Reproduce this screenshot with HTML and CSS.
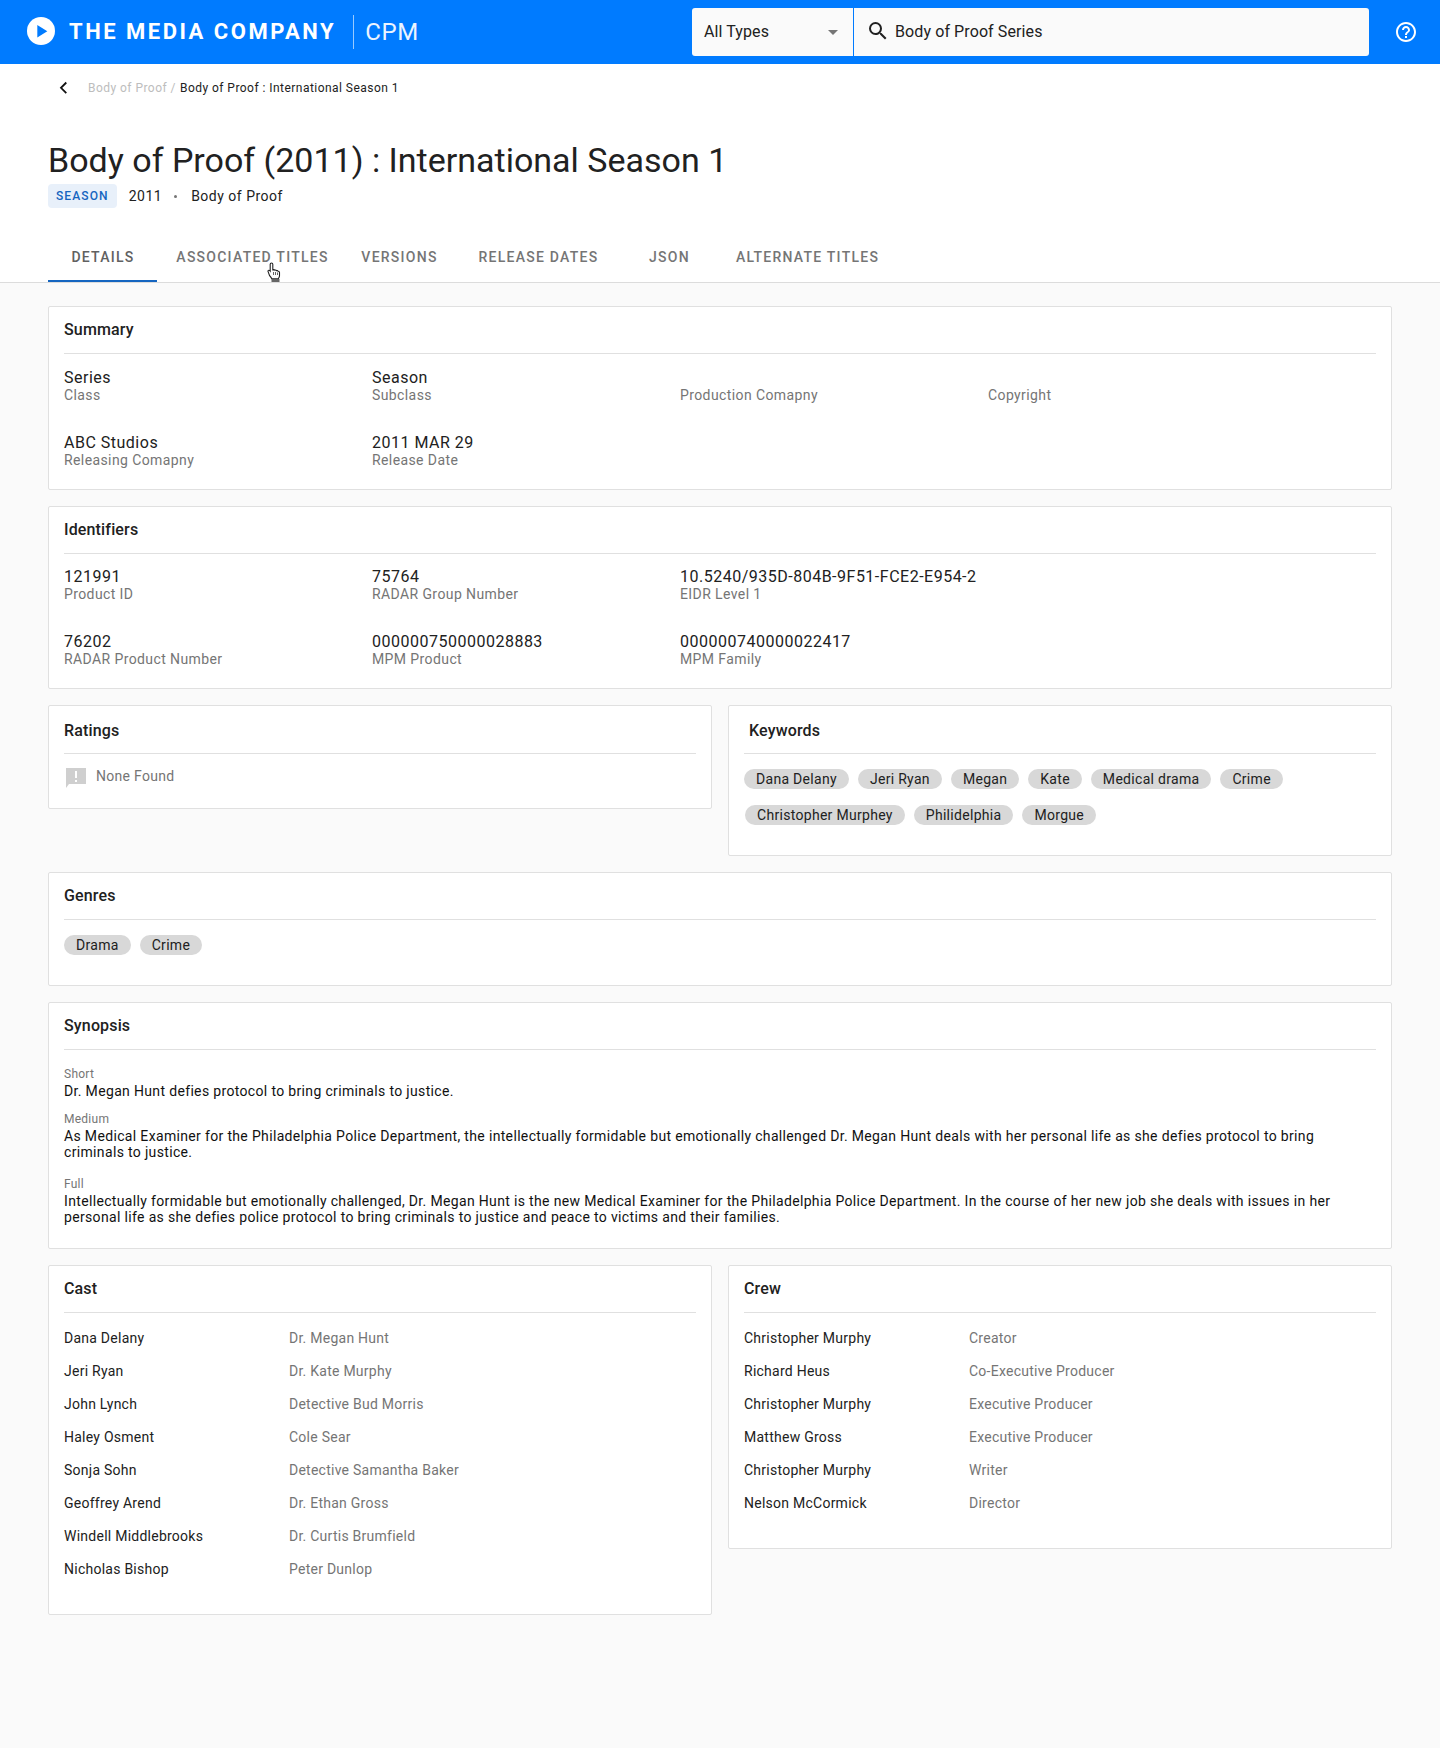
FILE: index.html
```html
<!DOCTYPE html>
<html lang="en">
<head>
<meta charset="utf-8">
<title>Body of Proof (2011) : International Season 1</title>
<link rel="stylesheet" href="styles.css">
</head>
<body>
<header class="topbar">
  <div class="brand">
    <svg class="brand-logo" viewBox="0 0 28 28"><circle cx="14" cy="14" r="14" fill="#fff"/><path d="M10.300 8 20.300 14.300 10.300 20.500z" fill="#007bff"/></svg>
    <span class="brand-name">THE MEDIA COMPANY</span>
    <span class="brand-product">CPM</span>
  </div>
  <div class="search">
    <div class="search-type"><span>All Types</span><i class="caret"></i></div>
    <div class="search-input">
      <svg class="search-icon" viewBox="0 0 24 24"><path d="M15.500 14h-.79l-.28-.27A6.470 6.470 0 0 0 16 9.500 6.500 6.500 0 1 0 9.500 16c1.610 0 3.090-.59 4.230-1.570l.27.28v.79l5 4.990L20.490 19l-4.990-5zm-6 0C7.010 14 5 11.990 5 9.500S7.010 5 9.500 5 14 7.010 14 9.500 11.990 14 9.500 14z" fill="#212121"/></svg>
      <span>Body of Proof Series</span>
    </div>
  </div>
  <svg class="help" viewBox="0 0 24 24"><path fill="#fff" d="M11 18h2v-2h-2v2zm1-16C6.480 2 2 6.480 2 12s4.480 10 10 10 10-4.480 10-10S17.520 2 12 2zm0 18c-4.410 0-8-3.590-8-8s3.590-8 8-8 8 3.590 8 8-3.590 8-8 8zm0-14c-2.210 0-4 1.790-4 4h2c0-1.100.9-2 2-2s2 .9 2 2c0 2-3 1.750-3 5h2c0-2.250 3-2.500 3-5 0-2.210-1.790-4-4-4z"/></svg>
</header>

<section class="hero">
  <nav class="crumbs">
    <svg class="back" viewBox="0 0 10 14"><path d="M8.300 1.500 3 6.800l5.300 5.300" fill="none" stroke="#111" stroke-width="1.800"/></svg>
    <span class="crumb-parent">Body of Proof /</span>
    <span class="crumb-current">Body of Proof : International Season 1</span>
  </nav>
  <h1 class="title">Body of Proof (2011) : International Season 1</h1>
  <div class="meta">
    <span class="badge">SEASON</span>
    <span>2011</span>
    <span class="dot"></span>
    <span>Body of Proof</span>
  </div>
  <div class="tabs">
    <a class="tab tab-active">DETAILS</a>
    <a class="tab">ASSOCIATED TITLES</a>
    <a class="tab">VERSIONS</a>
    <a class="tab">RELEASE DATES</a>
    <a class="tab">JSON</a>
    <a class="tab">ALTERNATE TITLES</a>
    <svg class="cursor" viewBox="0 0 14 20"><path d="M4.500 1c.8 0 1.300.6 1.300 1.300v5.500l.9-.2c.6 0 1 .2 1.200.5.7-.2 1.300 0 1.600.5.700-.2 1.400.1 1.600.7.800 0 1.400.5 1.400 1.300v3.100c0 1.300-.6 2-1.200 3H4.800c-.5-1-1.300-2-2.200-3.100L1.200 9.900c-.4-.6-.3-1.200.2-1.500.5-.3 1-.2 1.500.2l.3.400V2.300c0-.7.500-1.300 1.300-1.300z" fill="#fff" stroke="#222" stroke-width="1.100"/><path d="M6.500 10v3M8.500 10v3M10.500 10.500v2.500" stroke="#222" stroke-width=".7"/><rect x="4.500" y="17" width="8" height="3" fill="#666"/></svg>
  </div>
</section>

<main class="content">
  <section class="card card-summary">
    <h2 class="card-title">Summary</h2>
    <div class="fields">
      <div class="field"><div class="value">Series</div><div class="label">Class</div></div>
      <div class="field"><div class="value">Season</div><div class="label">Subclass</div></div>
      <div class="field"><div class="value">&nbsp;</div><div class="label">Production Comapny</div></div>
      <div class="field"><div class="value">&nbsp;</div><div class="label">Copyright</div></div>
      <div class="field"><div class="value">ABC Studios</div><div class="label">Releasing Comapny</div></div>
      <div class="field"><div class="value">2011 MAR 29</div><div class="label">Release Date</div></div>
    </div>
  </section>

  <section class="card card-identifiers">
    <h2 class="card-title">Identifiers</h2>
    <div class="fields">
      <div class="field"><div class="value">121991</div><div class="label">Product ID</div></div>
      <div class="field"><div class="value">75764</div><div class="label">RADAR Group Number</div></div>
      <div class="field field-nowrap"><div class="value">10.5240/935D-804B-9F51-FCE2-E954-2</div><div class="label">EIDR Level 1</div></div>
      <div class="field field-break"><div class="value">76202</div><div class="label">RADAR Product Number</div></div>
      <div class="field"><div class="value">000000750000028883</div><div class="label">MPM Product</div></div>
      <div class="field"><div class="value">000000740000022417</div><div class="label">MPM Family</div></div>
    </div>
  </section>

  <div class="split split-top">
    <section class="card card-ratings">
      <h2 class="card-title">Ratings</h2>
      <div class="none-found">
        <svg class="none-icon" viewBox="0 0 20 20"><path d="M0 0h20v16H3l-3 4z" fill="#cfcfcf"/><rect x="9" y="3" width="2" height="7" fill="#fff"/><rect x="9" y="12" width="2" height="2" fill="#fff"/></svg>
        <span>None Found</span>
      </div>
    </section>
    <section class="card card-keywords">
      <h2 class="card-title title-inset">Keywords</h2>
      <div class="chips">
        <span class="chip">Dana Delany</span>
        <span class="chip">Jeri Ryan</span>
        <span class="chip">Megan</span>
        <span class="chip">Kate</span>
        <span class="chip">Medical drama</span>
        <span class="chip">Crime</span>
      </div>
      <div class="chips chips-second">
        <span class="chip">Christopher Murphey</span>
        <span class="chip">Philidelphia</span>
        <span class="chip">Morgue</span>
      </div>
    </section>
  </div>

  <section class="card card-genres">
    <h2 class="card-title">Genres</h2>
    <div class="chips">
      <span class="chip">Drama</span>
      <span class="chip">Crime</span>
    </div>
  </section>

  <section class="card card-synopsis">
    <h2 class="card-title">Synopsis</h2>
    <div class="syn">
      <div class="syn-label">Short</div>
      <p class="syn-text">Dr. Megan Hunt defies protocol to bring criminals to justice.</p>
    </div>
    <div class="syn">
      <div class="syn-label">Medium</div>
      <p class="syn-text">As Medical Examiner for the Philadelphia Police Department, the intellectually formidable but emotionally challenged Dr. Megan Hunt deals with her personal life as she defies protocol to bring criminals to justice.</p>
    </div>
    <div class="syn syn-full">
      <div class="syn-label">Full</div>
      <p class="syn-text">Intellectually formidable but emotionally challenged, Dr. Megan Hunt is the new Medical Examiner for the Philadelphia Police Department. In the course of her new job she deals with issues in her personal life as she defies police protocol to bring criminals to justice and peace to victims and their families.</p>
    </div>
  </section>

  <div class="split">
    <section class="card card-people">
      <h2 class="card-title">Cast</h2>
      <div class="people">
        <div class="person"><span class="person-name">Dana Delany</span><span class="person-role">Dr. Megan Hunt</span></div>
        <div class="person"><span class="person-name">Jeri Ryan</span><span class="person-role">Dr. Kate Murphy</span></div>
        <div class="person"><span class="person-name">John Lynch</span><span class="person-role">Detective Bud Morris</span></div>
        <div class="person"><span class="person-name">Haley Osment</span><span class="person-role">Cole Sear</span></div>
        <div class="person"><span class="person-name">Sonja Sohn</span><span class="person-role">Detective Samantha Baker</span></div>
        <div class="person"><span class="person-name">Geoffrey Arend</span><span class="person-role">Dr. Ethan Gross</span></div>
        <div class="person"><span class="person-name">Windell Middlebrooks</span><span class="person-role">Dr. Curtis Brumfield</span></div>
        <div class="person"><span class="person-name">Nicholas Bishop</span><span class="person-role">Peter Dunlop</span></div>
      </div>
    </section>
    <section class="card card-people">
      <h2 class="card-title">Crew</h2>
      <div class="people">
        <div class="person"><span class="person-name">Christopher Murphy</span><span class="person-role">Creator</span></div>
        <div class="person"><span class="person-name">Richard Heus</span><span class="person-role">Co-Executive Producer</span></div>
        <div class="person"><span class="person-name">Christopher Murphy</span><span class="person-role">Executive Producer</span></div>
        <div class="person"><span class="person-name">Matthew Gross</span><span class="person-role">Executive Producer</span></div>
        <div class="person"><span class="person-name">Christopher Murphy</span><span class="person-role">Writer</span></div>
        <div class="person"><span class="person-name">Nelson McCormick</span><span class="person-role">Director</span></div>
      </div>
    </section>
  </div>
</main>
</body>
</html>
```
FILE: styles.css
```css
* { box-sizing: border-box; }
html, body { margin: 0; padding: 0; }
body {
  min-height: 1748px;
  background: #fafafa;
  color: #212121;
  font-family: Roboto, "Liberation Sans", sans-serif;
  font-size: 14px;
}

.topbar {
  height: 64px;
  background: #007bff;
  display: flex;
  align-items: center;
  padding-left: 27px;
}
.brand { display: flex; align-items: center; width: 665px; color: #fff; }
.brand-logo { width: 28px; height: 28px; flex: none; margin-bottom: 2px; }
.brand-name {
  margin-left: 14px;
  font-size: 22px;
  font-weight: 700;
  letter-spacing: 2.5px;
  line-height: 34px;
  padding-right: 17px;
  border-right: 1px solid rgba(255, 255, 255, .6);
}
.brand-product { margin-left: 11px; font-size: 24px; letter-spacing: .7px; font-weight: 400; opacity: .92; }
.search { display: flex; width: 677px; height: 48px; background: #fafafa; border-radius: 3px; font-size: 16px; letter-spacing: .1px; }
.search-type {
  width: 162px;
  display: flex;
  align-items: center;
  justify-content: space-between;
  padding: 0 15px 2px 12px;
  border-right: 1px solid #007bff;
}
.caret { width: 0; height: 0; border-left: 5px solid transparent; border-right: 5px solid transparent; border-top: 5px solid #757575; margin-top: 2px; }
.search-input { flex: 1; display: flex; align-items: center; padding: 0 0 2px 12px; gap: 5px; }
.search-icon { width: 24px; height: 24px; }
.help { width: 24px; height: 24px; margin-left: 25px; }

.hero { height: 219px; background: #fff; border-bottom: 1px solid #dcdcdc; padding: 0 48px; }
.crumbs { display: flex; align-items: center; height: 48px; font-size: 12px; letter-spacing: .46px; padding-left: 10px; }
.back { width: 10px; height: 14px; flex: none; margin-right: 20px; margin-bottom: 1px; }
.crumb-parent { color: #bdbdbd; margin-right: 4px; }
.crumb-current { color: #212121; }
.title { margin: 28px 0 0; font-size: 34px; line-height: 40px; font-weight: 400; letter-spacing: 0; }
.meta { display: flex; align-items: center; gap: 12px; margin-top: 4px; font-size: 14px; letter-spacing: .5px; height: 24px; }
.badge { background: #e8f0fa; color: #1565c0; height: 24px; line-height: 24px; padding: 0 8px; border-radius: 4px; font-size: 12px; font-weight: 500; letter-spacing: 1.1px; }
.dot { width: 3px; height: 3px; background: #757575; border-radius: 50%; margin: 0 2px 0 0; }
.tabs {
  position: relative;
  display: grid;
  grid-template-columns: 109px 190px 104px 174px 88px 188px;
  margin-top: 26px;
  height: 48px;
}
.tab {
  font-size: 14px;
  font-weight: 500;
  letter-spacing: 1.25px;
  line-height: 46px;
  text-align: center;
  padding-left: 1px;
  color: #757575;
  height: 48px;
}
.tab-active { color: #616161; border-bottom: 2px solid #1565c0; }
.cursor { position: absolute; left: 219px; top: 28px; width: 14px; height: 20px; }

.content { padding: 23px 48px 0; display: flex; flex-direction: column; gap: 16px; }
.split { display: grid; grid-template-columns: 1fr 1fr; gap: 16px; align-items: start; }
.card { background: #fff; border: 1px solid #e0e0e0; border-radius: 2px; padding: 0 15px 16px; }
.card-title {
  margin: 0;
  height: 47px;
  line-height: 45px;
  font-size: 16px;
  font-weight: 500;
  letter-spacing: .15px;
  border-bottom: 1px solid #e0e0e0;
}
.split-top .card-title { height: 48px; line-height: 49px; }
.title-inset { padding-left: 5px; }

.fields { display: grid; grid-template-columns: repeat(4, 308px); row-gap: 31px; padding: 15px 0 5px; }
.card-identifiers .fields { padding: 14px 0 5px; }
.field { min-width: 0; }
.field-nowrap { white-space: nowrap; }
.field-break { grid-column: 1; }
.value { font-size: 16px; line-height: 18px; letter-spacing: .5px; color: #212121; }
.label { font-size: 14px; line-height: 16px; letter-spacing: .4px; color: #757575; }

.card-ratings { height: 104px; }
.none-found { display: flex; align-items: flex-start; gap: 10px; padding: 14px 0 0 2px; color: #757575; line-height: 16px; letter-spacing: .3px; }
.none-icon { width: 20px; height: 20px; }
.card-keywords { height: 151px; }
.chips { display: flex; gap: 9px; padding-top: 15px; }
.chips-second { padding: 16px 0 0 1px; }
.chip { height: 20px; line-height: 20px; padding: 0 12px; border-radius: 10px; background: #d8d8d8; color: #212121; font-size: 14px; letter-spacing: .3px; }
.card-genres { height: 114px; }

.card-synopsis { height: 247px; padding-top: 0; }
.syn { margin-top: 13px; }
.syn:first-of-type { margin-top: 17px; }
.syn-full { margin-top: 17px; }
.syn-label { font-size: 12px; line-height: 14px; letter-spacing: .25px; color: #757575; margin-bottom: 2px; }
.syn-text { margin: 0; font-size: 14px; line-height: 16px; letter-spacing: .34px; color: #111; }

.card-people { padding-bottom: 29px; }
.people { padding-top: 8px; }
.person { display: flex; height: 33px; align-items: center; letter-spacing: .25px; }
.person-name { width: 225px; color: #212121; }
.person-role { color: #757575; }
```
